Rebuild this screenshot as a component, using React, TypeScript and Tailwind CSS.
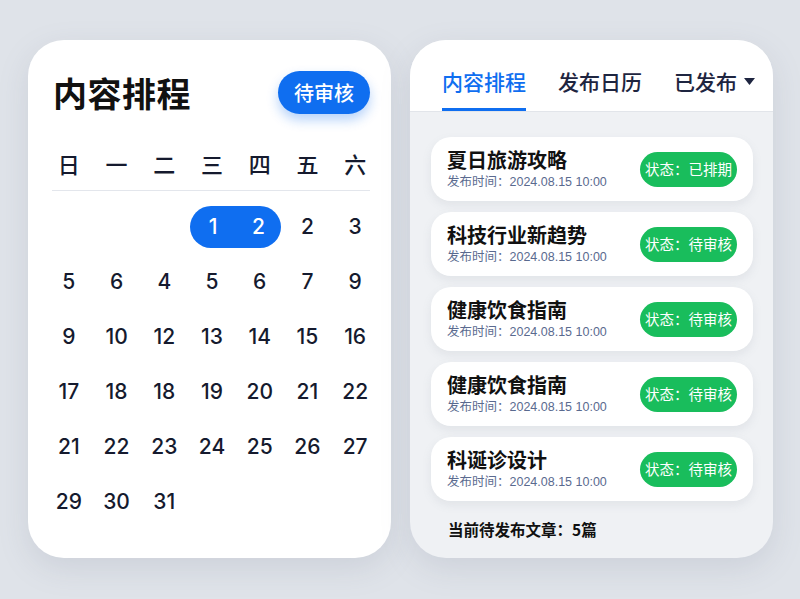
const font = { fontFamily: "'Noto Sans CJK SC', 'Noto Sans', sans-serif" };
const numFont = { fontFamily: "Inter, 'Noto Sans CJK SC', sans-serif" };
const timeFont = { fontFamily: "'Liberation Sans', 'Noto Sans CJK SC', sans-serif" };

const weekdays = ["日", "一", "二", "三", "四", "五", "六"];
const rows: (number | null)[][] = [
  [5, 6, 4, 5, 6, 7, 9],
  [9, 10, 12, 13, 14, 15, 16],
  [17, 18, 18, 19, 20, 21, 22],
  [21, 22, 23, 24, 25, 26, 27],
  [29, 30, 31, null, null, null, null],
];

const posts = [
  { title: "夏日旅游攻略", status: "已排期" },
  { title: "科技行业新趋势", status: "待审核" },
  { title: "健康饮食指南", status: "待审核" },
  { title: "健康饮食指南", status: "待审核" },
  { title: "科诞诊设计", status: "待审核" },
];

const dayCls = "h-[55px] flex items-center justify-center text-[21px] font-medium text-[#151a2e]";

function CalendarCard() {
  return (
    <div className="w-[363px] h-[518px] bg-white rounded-[36px] shadow-[0_10px_30px_rgba(120,130,150,0.18)] flex flex-col">
      <div className="flex items-center justify-between pl-[25px] pr-[21px] pt-[31px]">
        <h1 className="text-[34px] font-bold text-[#111] leading-none tracking-[0.5px]">内容排程</h1>
        <button className="h-[43px] w-[92px] rounded-full bg-[#0f6ef0] text-white text-[20px] font-medium shadow-[0_6px_12px_rgba(15,110,240,0.3)]">
          待审核
        </button>
      </div>
      <div className="ml-[17px] w-[334px] mt-[27px] grid grid-cols-7 h-[44px] items-center">
        {weekdays.map((d) => (
          <div key={d} className="text-center text-[22px] font-medium text-[#151a2e]">
            {d}
          </div>
        ))}
      </div>
      <div className="ml-[24px] w-[318px] mt-[5px] h-px bg-[#e3e6ec]" />
      <div style={numFont} className="ml-[17px] w-[334px] mt-[8px] grid grid-cols-7">
        <div className="h-[55px]" />
        <div className="h-[55px]" />
        <div className="h-[55px]" />
        <div className="col-span-2 h-[55px] flex items-center justify-center">
          <div className="w-[91px] h-[42px] rounded-full bg-[#0f6ef0] grid grid-cols-2 items-center text-white text-[21px] font-medium">
            <span className="text-center">1</span>
            <span className="text-center">2</span>
          </div>
        </div>
        <div className={dayCls}>2</div>
        <div className={dayCls}>3</div>
        {rows.flat().map((n, i) => (
          <div key={i} className={dayCls}>
            {n ?? ""}
          </div>
        ))}
      </div>
    </div>
  );
}

function ListCard() {
  return (
    <div className="w-[363px] h-[518px] bg-[#eff1f4] rounded-[36px] overflow-hidden shadow-[0_10px_30px_rgba(120,130,150,0.18)] flex flex-col">
      <div className="bg-white h-[72px] border-b border-[#e2e5ea] flex items-end pl-[32px] gap-[32px]">
        <div className="text-[21px] font-medium text-[#0f6ef0] leading-[30px] pb-[12px] border-b-[3px] border-[#0f6ef0]">
          内容排程
        </div>
        <div className="text-[21px] font-medium text-[#1e2540] leading-[30px] pb-[15px]">发布日历</div>
        <div className="text-[21px] font-medium text-[#1e2540] leading-[30px] pb-[15px] flex items-center">
          已发布
          <svg className="ml-[7px]" width="11" height="7" viewBox="0 0 11 7">
            <path d="M0 0 L11 0 L5.5 7 Z" fill="#1e2540" />
          </svg>
        </div>
      </div>
      <div className="flex flex-col gap-[11px] pt-[25px] pl-[21px] pr-[20px]">
        {posts.map((p, i) => (
          <div
            key={i}
            className="h-[64px] bg-white rounded-[20px] flex items-center justify-between pl-[16px] pr-[16px] shadow-[0_4px_10px_rgba(120,130,150,0.12)]"
          >
            <div className="flex flex-col">
              <div className="text-[20px] font-bold text-[#111] leading-[26px]">{p.title}</div>
              <div style={timeFont} className="text-[12.5px] text-[#5a6a8f] leading-[18px]">
                发布时间：2024.08.15 10:00
              </div>
            </div>
            <div className="h-[35px] w-[97px] rounded-full bg-[#19bd5c] text-white text-[14.5px] flex items-center justify-center">
              状态：{p.status}
            </div>
          </div>
        ))}
      </div>
      <div className="mt-[16px] pl-[38px] text-[15.5px] font-semibold text-[#111] leading-[24px]">当前待发布文章：5篇</div>
    </div>
  );
}

export default function App() {
  return (
    <div style={font} className="w-[800px] h-[599px] bg-[#dfe3e9] flex gap-[19px] pl-[28px] pt-[40px]">
      <CalendarCard />
      <ListCard />
    </div>
  );
}
